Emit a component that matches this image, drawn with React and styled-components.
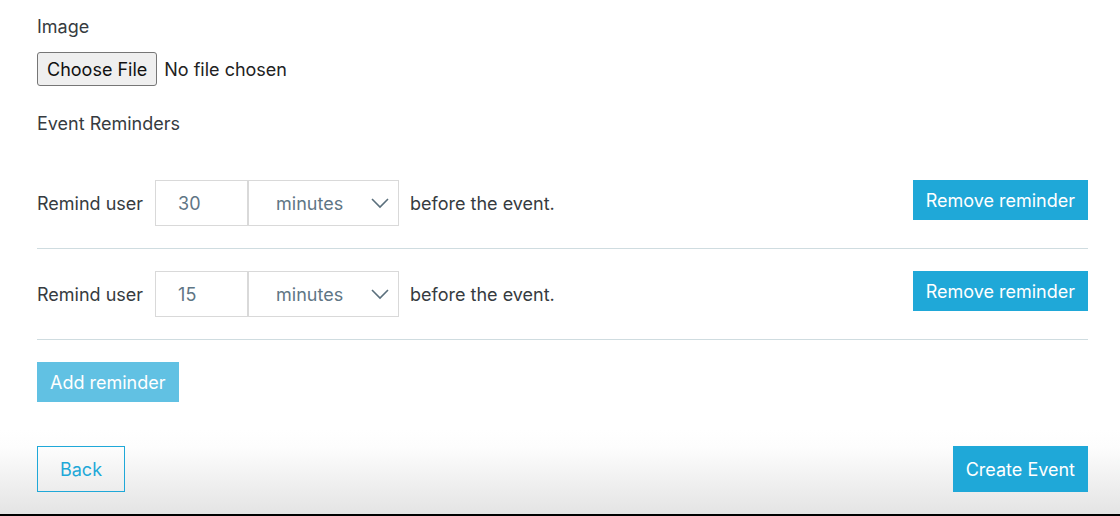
import React, { useState } from 'react';
import styled, { createGlobalStyle } from 'styled-components';

const GlobalStyle = createGlobalStyle`
  html, body {
    margin: 0;
    padding: 0;
    background: #fff;
  }
  body {
    font-family: Inter, "Noto Sans", sans-serif;
    color: #363b40;
  }
`;

const Page = styled.div`
  display: flex;
  flex-direction: column;
  height: 516px;
  box-sizing: border-box;
  border-bottom: 2px solid #000;
`;

const Body = styled.div`
  flex: 1;
  padding: 15px 32px 0 37px;
`;

const Label = styled.div`
  font-size: 18px;
  line-height: 24px;
  color: #363b40;
`;

const FileRow = styled.div`
  display: flex;
  align-items: center;
  gap: 7px;
  margin-top: 13px;
  font-size: 18px;
`;

const FileButton = styled.button`
  height: 34px;
  padding: 0 9px;
  font-family: Inter, "Noto Sans", sans-serif;
  font-size: 18px;
  color: #111;
  background: #efefef;
  border: 1px solid #767676;
  border-radius: 3px;
`;

const FileText = styled.span`
  color: #222;
`;

const SectionLabel = styled(Label)`
  margin-top: 26px;
`;

const Reminders = styled.div`
  margin-top: 44px;
`;

const ReminderRow = styled.div`
  display: flex;
  align-items: flex-start;
  padding-bottom: 22px;
  margin-bottom: 22px;
  border-bottom: 1px solid #cfdce0;
`;

const RowText = styled.span`
  font-size: 18px;
  line-height: 45px;
  padding-top: 1px;
  color: #363b40;
`;

const NumberBox = styled.input`
  box-sizing: border-box;
  width: 94px;
  height: 46px;
  margin-left: 12px;
  padding: 0 0 0 22px;
  font-family: Inter, "Noto Sans", sans-serif;
  font-size: 18px;
  color: #5f7685;
  border: 1px solid #d9d9d9;
  border-right: 2px solid #d9d9d9;
  outline: none;
`;

const SelectBox = styled.div`
  position: relative;
  box-sizing: border-box;
  width: 150px;
  height: 46px;
  margin-right: 11px;
  border: 1px solid #d9d9d9;
  border-left: none;
  display: flex;
  align-items: center;
  padding: 1px 0 0 27px;
  font-size: 18px;
  color: #5f7685;
`;

const Chevron = styled.svg`
  position: absolute;
  right: 8px;
  top: 16px;
`;

const Spacer = styled.div`
  flex: 1;
`;

const Button = styled.button`
  box-sizing: border-box;
  height: ${p => (p.$tall ? '46px' : '40px')};
  padding: 0 12px;
  font-family: Inter, "Noto Sans", sans-serif;
  font-size: 18px;
  color: ${p => (p.$outline ? '#1ea8d8' : '#fff')};
  background: ${p => (p.$outline ? 'transparent' : '#1fa8d8')};
  border: 1px solid #1fa8d8;
  opacity: ${p => (p.$faded ? 0.7 : 1)};
  cursor: pointer;
`;

const Footer = styled.div`
  display: flex;
  justify-content: space-between;
  align-items: center;
  height: 84px;
  padding: 0 32px 6px 37px;
  box-sizing: border-box;
  background: linear-gradient(#fff 0%, #fdfdfd 20%, #e4e4e4 100%);
`;

const BackButton = styled(Button)`
  width: 88px;
`;

const reminders = [
  { id: 1, amount: 30, unit: 'minutes' },
  { id: 2, amount: 15, unit: 'minutes' },
];

function Reminder({ item }) {
  return (
    <ReminderRow>
      <RowText>Remind user</RowText>
      <NumberBox defaultValue={item.amount} />
      <SelectBox>
        {item.unit}
        <Chevron width="20" height="12" viewBox="0 0 20 12">
          <path d="M2 2 L10 10 L18 2" fill="none" stroke="#5a6f7c" strokeWidth="1.6" />
        </Chevron>
      </SelectBox>
      <RowText>before the event.</RowText>
      <Spacer />
      <Button>Remove reminder</Button>
    </ReminderRow>
  );
}

export default function App() {
  const [list] = useState(reminders);
  return (
    <Page>
      <GlobalStyle />
      <Body>
        <Label>Image</Label>
        <FileRow>
          <FileButton>Choose File</FileButton>
          <FileText>No file chosen</FileText>
        </FileRow>
        <SectionLabel>Event Reminders</SectionLabel>
        <Reminders>
          {list.map(item => (
            <Reminder key={item.id} item={item} />
          ))}
        </Reminders>
        <Button $faded>Add reminder</Button>
      </Body>
      <Footer>
        <BackButton $outline $tall>Back</BackButton>
        <Button $tall>Create Event</Button>
      </Footer>
    </Page>
  );
}
